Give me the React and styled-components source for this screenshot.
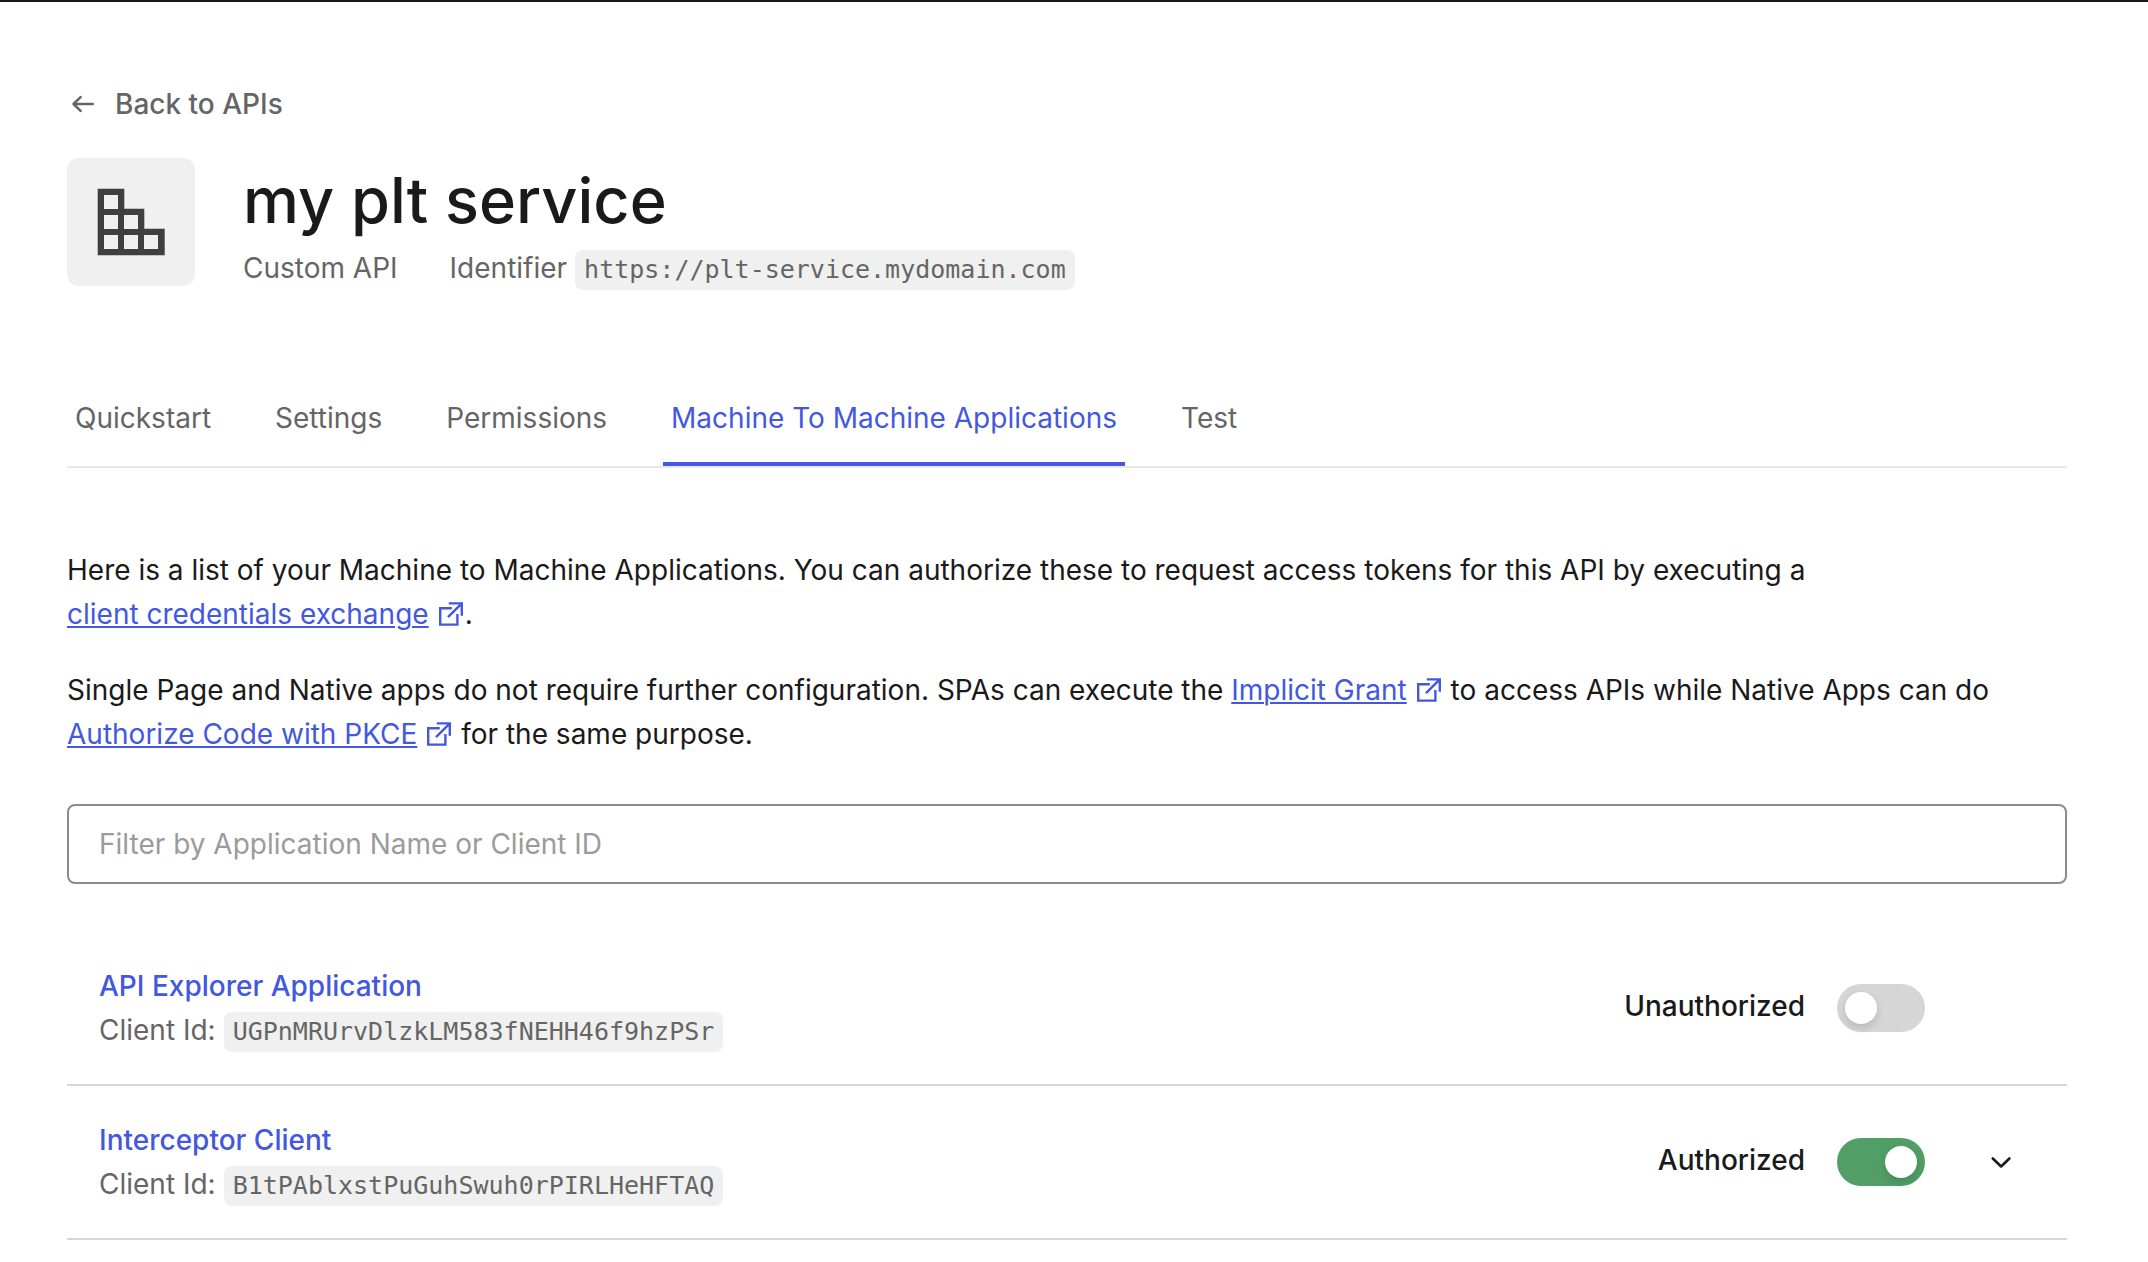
import React, { useState } from "react";
import styled, { createGlobalStyle } from "styled-components";

const sans = `Inter, "Liberation Sans", sans-serif`;
const mono = `"DejaVu Sans Mono", "Liberation Mono", monospace`;

const colors = {
  text: "#1a1a1a",
  muted: "#656565",
  primary: "#4358df",
  surface: "#f0f0f0",
};

const GlobalStyle = createGlobalStyle`
  *, *::before, *::after { box-sizing: border-box; }
  body {
    margin: 0;
    background: #fff;
    color: ${colors.text};
    font: 400 28px/44px ${sans};
  }
`;

const Page = styled.div`
  border-top: 2px solid #191919;
  padding: 80px 81px 0 67px;
`;

const BackLink = styled.a`
  display: flex;
  width: fit-content;
  align-items: center;
  gap: 16px;
  color: ${colors.muted};
  font-weight: 500;
  text-decoration: none;
`;

const Header = styled.header`
  display: flex;
  align-items: flex-start;
  gap: 48px;
  margin-top: 32px;
`;

const ServiceIcon = styled.div`
  display: grid;
  place-items: center;
  width: 128px;
  height: 128px;
  border-radius: 12px;
  background: ${colors.surface};
`;

const Title = styled.h1`
  margin: 4px 0 8px;
  font-size: 63px;
  line-height: 76px;
  font-weight: 500;
`;

const Meta = styled.div`
  display: flex;
  gap: 52px;
  color: ${colors.muted};
`;

const Code = styled.code`
  display: inline-block;
  margin-left: 8px;
  padding: 0 9px;
  border-radius: 8px;
  background: ${colors.surface};
  color: ${colors.muted};
  font: 400 25px/40px ${mono};
`;

const Tabs = styled.nav`
  display: flex;
  gap: 48px;
  margin-top: 82px;
  border-bottom: 2px solid #e8e8e8;
`;

const Tab = styled.a`
  padding: 24px 8px 22px;
  border-bottom: 4px solid ${(p) => (p.$active ? colors.primary : "transparent")};
  color: ${(p) => (p.$active ? colors.primary : colors.muted)};
  text-decoration: none;
`;

const Intro = styled.section`
  margin-top: 80px;
`;

const Paragraph = styled.p`
  margin: 0 0 32px;
`;

const DocLink = styled.a`
  color: ${colors.primary};
  white-space: nowrap;
  text-decoration: underline;
  text-underline-offset: 2px;
  text-decoration-thickness: 2px;
`;

const ExternalSvg = styled.svg`
  margin: 0 2px 0 10px;
  vertical-align: -2px;
`;

const Filter = styled.input`
  display: block;
  width: 100%;
  height: 80px;
  margin-top: 48px;
  padding: 0 30px;
  border: 2px solid #8c8c8c;
  border-radius: 8px;
  background: #fff;
  color: ${colors.text};
  font: 400 28px/44px ${sans};
  &::placeholder { color: #9b9b9b; opacity: 1; }
`;

const AppList = styled.ul`
  margin: 48px 0 0;
  padding: 0;
  list-style: none;
`;

const AppRow = styled.li`
  display: flex;
  align-items: center;
  height: 154px;
  padding: 0 50px 0 32px;
  border-bottom: 2px solid #d6d6d6;
`;

const AppInfo = styled.div`
  flex: 1;
  color: ${colors.muted};
`;

const AppName = styled.a`
  display: block;
  width: fit-content;
  color: ${colors.primary};
  font-weight: 500;
  text-decoration: none;
`;

const Status = styled.label`
  display: flex;
  align-items: center;
  gap: 32px;
  font-weight: 500;
`;

const StatusText = styled.span`
  padding-bottom: 4px;
`;

const Toggle = styled.input`
  appearance: none;
  display: flex;
  align-items: center;
  width: 88px;
  height: 48px;
  margin: 0;
  padding: 0 8px;
  border-radius: 24px;
  background: #d6d6d6;
  &::before {
    content: "";
    width: 32px;
    height: 32px;
    border-radius: 50%;
    background: #fff;
    box-shadow: 0 4px 8px rgba(0, 0, 0, 0.14);
  }
  &:checked { background: #519f66; justify-content: flex-end; }
`;

const ExpandSlot = styled.div`
  display: flex;
  justify-content: flex-end;
  width: 92px;
`;

const ExpandButton = styled.button`
  display: grid;
  place-items: center;
  width: 32px;
  height: 32px;
  padding: 0;
  border: 0;
  background: none;
  color: ${colors.text};
`;

const ArrowLeft = () => (
  <svg width="32" height="32" viewBox="0 0 32 32" fill="none" stroke="currentColor" strokeWidth="2.5" strokeLinecap="round" strokeLinejoin="round" aria-hidden="true">
    <path d="M25.8 16H6.5M13.6 9.2L6.5 16l7.1 6.8" />
  </svg>
);

const Blocks = () => (
  <svg width="68" height="68" viewBox="-0.7 -0.7 68 68" aria-hidden="true">
    <path fill="#3f3f3f" fillRule="evenodd" d="M0 0H26.6V20H46.6V40H67V66.5H0ZM6.3 6.3V20.3H20.3V6.3ZM6.3 26.3V40.3H20.3V26.3ZM26.3 26.3V40.3H40.3V26.3ZM6.3 46.3V60.3H20.3V46.3ZM26.3 46.3V60.3H40.3V46.3ZM46.3 46.3V60.3H60.3V46.3Z" />
  </svg>
);

const ExternalIcon = () => (
  <ExternalSvg width="24" height="24" viewBox="0 0 24 24" fill="none" stroke="currentColor" strokeWidth="2.4" aria-hidden="true">
    <path d="M12.8 6.2H1.2V22.6H18.4V12M9.8 1.4H22.8V13.8M22.6 1.6L9 15.2" />
  </ExternalSvg>
);

const ChevronDown = () => (
  <svg width="32" height="32" viewBox="0 0 32 32" fill="none" stroke="currentColor" strokeWidth="2.6" strokeLinecap="round" strokeLinejoin="round" aria-hidden="true">
    <path d="M7.8 12.5l8.3 8 8.3-8" />
  </svg>
);

const ExternalLink = ({ href, children }) => (
  <DocLink href={href}>
    {children}
    <ExternalIcon />
  </DocLink>
);

const tabs = ["Quickstart", "Settings", "Permissions", "Machine To Machine Applications", "Test"];

const applications = [
  { name: "API Explorer Application", clientId: "UGPnMRUrvDlzkLM583fNEHH46f9hzPSr", authorized: false },
  { name: "Interceptor Client", clientId: "B1tPAblxstPuGuhSwuh0rPIRLHeHFTAQ", authorized: true },
];

function Application({ name, clientId, authorized }) {
  const [on, setOn] = useState(authorized);
  return (
    <AppRow>
      <AppInfo>
        <AppName href="#application">{name}</AppName>
        Client Id:<Code>{clientId}</Code>
      </AppInfo>
      <Status>
        <StatusText>{on ? "Authorized" : "Unauthorized"}</StatusText>
        <Toggle type="checkbox" role="switch" checked={on} onChange={(e) => setOn(e.target.checked)} />
      </Status>
      <ExpandSlot>
        {on && (
          <ExpandButton type="button" aria-label="Expand">
            <ChevronDown />
          </ExpandButton>
        )}
      </ExpandSlot>
    </AppRow>
  );
}

export default function App() {
  return (
    <Page>
      <GlobalStyle />
      <BackLink href="#apis">
        <ArrowLeft />
        Back to APIs
      </BackLink>
      <Header>
        <ServiceIcon>
          <Blocks />
        </ServiceIcon>
        <div>
          <Title>my plt service</Title>
          <Meta>
            <span>Custom API</span>
            <span>Identifier<Code>https://plt-service.mydomain.com</Code></span>
          </Meta>
        </div>
      </Header>
      <Tabs>
        {tabs.map((tab) => (
          <Tab key={tab} href="#tab" $active={tab === "Machine To Machine Applications"}>{tab}</Tab>
        ))}
      </Tabs>
      <Intro>
        <Paragraph>
          Here is a list of your Machine to Machine Applications. You can authorize these to request access tokens for this API by executing a{" "}
          <ExternalLink href="#client-credentials">client credentials exchange</ExternalLink>.
        </Paragraph>
        <Paragraph>
          Single Page and Native apps do not require further configuration. SPAs can execute the{" "}
          <ExternalLink href="#implicit-grant">Implicit Grant</ExternalLink> to access APIs while Native Apps can do{" "}
          <ExternalLink href="#pkce">Authorize Code with PKCE</ExternalLink> for the same purpose.
        </Paragraph>
      </Intro>
      <Filter type="text" aria-label="Filter applications" placeholder="Filter by Application Name or Client ID" />
      <AppList>
        {applications.map((app) => (
          <Application key={app.clientId} {...app} />
        ))}
      </AppList>
    </Page>
  );
}
